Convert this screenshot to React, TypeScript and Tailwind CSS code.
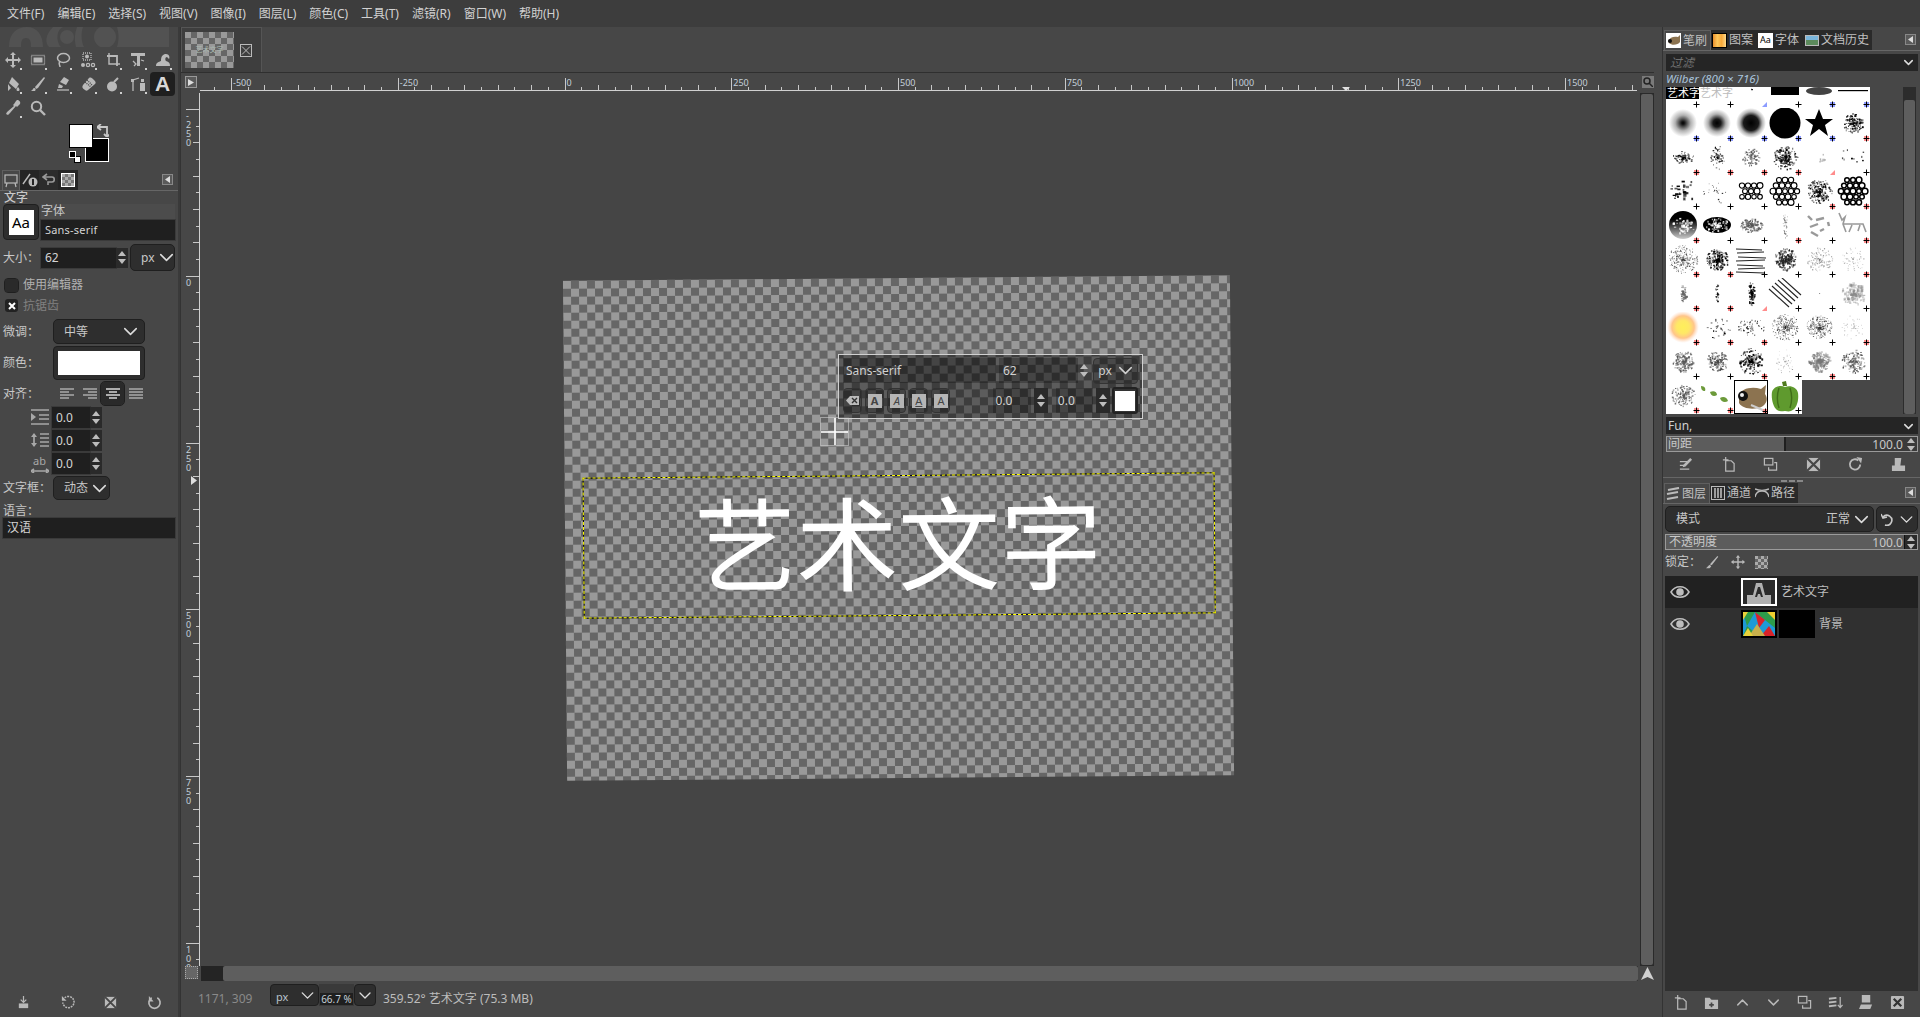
import { ChevronDown, ChevronUp } from "lucide-react";
import type { ReactNode } from "react";

const MENU = ["文件(F)", "编辑(E)", "选择(S)", "视图(V)", "图像(I)", "图层(L)", "颜色(C)", "工具(T)", "滤镜(R)", "窗口(W)", "帮助(H)"];

function Ic({ children, size = 16, className = "text-[#b9b9b9]" }: { children: ReactNode; size?: number; className?: string }) {
  return (
    <svg viewBox="0 0 16 16" width={size} height={size} fill="none" stroke="currentColor" strokeWidth={1.3} className={className}>
      {children}
    </svg>
  );
}

const f = { fill: "currentColor", stroke: "none" };

const TOOLS: ReactNode[] = [
  <><path d="M8 2v12M2 8h12" strokeWidth={2} /><path {...f} d="M8 0l3 3H5zM8 16l3-3H5zM0 8l3-3v6zM16 8l-3-3v6z" /></>,
  <><rect x="1.5" y="3.5" width="13" height="9" strokeDasharray="1 1" /><rect {...f} x="3.5" y="5.5" width="9" height="5" /></>,
  <><ellipse cx="8.5" cy="6" rx="6" ry="4.5" strokeWidth={1.5} /><path d="M5 10c-2 1 0 3 0 5" strokeWidth={1.5} /></>,
  <><rect x="3" y="1" width="8" height="7" strokeDasharray="1 1" /><circle {...f} cx="7" cy="4.5" r="2" /><circle {...f} cx="3" cy="13" r="2" /><circle cx="8" cy="13" r="1.6" /><circle cx="13" cy="13" r="1.6" /></>,
  <><path d="M2 4h10v10" strokeWidth={1.8} /><path d="M4 1v11h11" strokeWidth={1.4} /></>,
  <><path {...f} d="M1 1h14v3H10v10H7V4H1z" /><path d="M3 9l3 3-2 2" /><path d="M11 8l3 1" /></>,
  <><path {...f} d="M1 14c0-4 3-4 5-5 0-5 2-7 5-7s4 3 3 5l-2-2c-2 0-2 3-1 4 3 1 4 2 4 5z" /></>,
  <><path {...f} d="M7 1l7 7-3 5-7-6zM3 8l3 4-3 3z" /><path {...f} d="M13 11c2 2 2 4 0 4s-2-2 0-4z" /></>,
  <><path {...f} d="M14 1l1 1-7 10-2 1-1-2z" /><path {...f} d="M4 12c2 0 2 2 1 3H1c2-1 2-3 3-3z" /></>,
  <><path {...f} d="M9 1l5 3-3 5-6-3z" /><path d="M2 14h12" /><path {...f} d="M4 8l4 2-1 2H3z" /></>,
  <><path {...f} d="M5 14c-3-2-3-3-2-5l6-7c2-1 3 0 5 2s2 3 1 4l-7 6c-1 1-2 1-3 0z" /><path stroke="#474747" strokeDasharray="1 1" d="M5 6l6 5M7 4l5 5" /></>,
  <><circle {...f} cx="7" cy="10.5" r="5" /><path d="M9 6l4-4" strokeWidth={2} /></>,
  <><path d="M3 15V4l6-2" /><rect {...f} x="1" y="3" width="3" height="3" /><rect {...f} x="10" y="7" width="5" height="8" /><rect {...f} x="11" y="3" width="3" height="3" /></>,
  <></>,
  <><path {...f} d="M12 0c2 0 4 2 3 4l-2 2-1 1-1-1-6 7-2 2-2-1 1-2 7-6-1-1 1-1 2-3z" /></>,
  <><circle cx="6.5" cy="6.5" r="4.7" strokeWidth={2} /><path d="M10 10l5 5" strokeWidth={2.4} /></>,
];

function rng(seed: number) {
  let s = seed * 9301 + 49297;
  return () => {
    s = (s * 1664525 + 1013904223) % 4294967296;
    return s / 4294967296;
  };
}

type N = { n: number; rx: number; ry: number; s: number; c?: string; o?: number };

function Noise({ seed, n, rx, ry, s, c = "#000", o = 1 }: N & { seed: number }) {
  const r = rng(seed);
  const dots = [];
  for (let i = 0; i < n; i++) {
    const a = r() * Math.PI * 2;
    const d = Math.pow(r(), 0.9);
    dots.push(
      <rect key={i} x={17 + Math.cos(a) * d * rx} y={15 + Math.sin(a) * d * ry} width={s * (0.5 + r())} height={s * (0.5 + r())} fill={c} opacity={o * (0.4 + r() * 0.6)} />,
    );
  }
  return <>{dots}</>;
}

const nz = (n: number, rx: number, ry: number, s: number, c?: string, o?: number) => ({ t: "n", n, rx, ry, s, c, o });
const soft = (r: number, core: number) => ({ t: "soft", r, core });
const lab = (t: string) => ({ t });

const BRUSHES: any[][] = [
  [lab("text1"), lab("text2"), nz(4, 1, 1, 1), lab("bar"), lab("blur"), lab("line")],
  [soft(14, 0.12), soft(14, 0.28), soft(15, 0.5), lab("circle"), lab("star"), nz(130, 10, 10, 1.4)],
  [nz(80, 11, 6, 1.3), nz(70, 7, 12, 1.2), nz(90, 9, 9, 1.2, "#555"), nz(170, 12, 12, 1.4), nz(6, 9, 9, 2, "#aaa"), nz(10, 13, 13, 1.4)],
  [nz(30, 13, 13, 2.4), nz(22, 14, 13, 1), lab("bub1"), lab("bub2"), nz(230, 13, 12, 1.2), lab("bub3")],
  [lab("moon"), lab("oval"), nz(160, 11, 7, 1.3, "#555"), nz(30, 3, 14, 1, "#666"), lab("rods"), lab("horse")],
  [nz(300, 15, 14, 0.8, "#333"), nz(200, 11, 11, 1.4), lab("lines"), nz(180, 11, 11, 1.5, "#222"), nz(140, 13, 12, 0.9, "#555", 0.7), nz(60, 12, 12, 0.9, "#777", 0.7)],
  [nz(50, 3, 9, 1.4, "#666"), nz(20, 2, 10, 1.4), nz(70, 3, 12, 1.6), lab("diag"), nz(1, 0, 0, 1), nz(140, 12, 11, 2, "#888", 0.6)],
  [lab("sun"), nz(28, 14, 11, 1.3), nz(55, 14, 10, 1.1), nz(280, 14, 13, 0.8, "#222"), nz(240, 13, 12, 0.9, "#333"), nz(45, 12, 12, 0.8, "#999")],
  [nz(170, 11, 11, 1.4, "#555"), nz(150, 11, 10, 1.3, "#444"), nz(160, 12, 13, 1.5), nz(45, 11, 12, 0.8, "#888"), nz(200, 11, 10, 1.7, "#777", 0.8), nz(130, 12, 12, 1.4, "#555")],
  [nz(170, 12, 11, 1.2, "#555"), lab("leaf"), lab("wilber"), lab("pepper")],
];

const MARKS = ["kktkbb", "bbbbbr", "rrrrTk", "kkkkrr", "rkkrkr", "rrkkkr", "rrTkkk", "rrrkkr", "kkrkrk", "rrrk"];

function Brush({ spec, r, c, mark }: { spec: any; r: number; c: number; mark: string }) {
  const id = `b${r}${c}`;
  const seed = r * 7 + c * 13 + 3;
  let body: ReactNode = null;
  switch (spec.t) {
    case "n":
      body = <Noise seed={seed} {...spec} />;
      break;
    case "soft":
      body = (
        <>
          <defs>
            <radialGradient id={id}>
              <stop offset="0" stopColor="#000" />
              <stop offset={spec.core} stopColor="#000" stopOpacity="0.9" />
              <stop offset={(spec.core + 1) / 2} stopColor="#000" stopOpacity="0.3" />
              <stop offset="1" stopColor="#000" stopOpacity="0" />
            </radialGradient>
          </defs>
          <circle cx="17" cy="15" r={spec.r} fill={`url(#${id})`} />
        </>
      );
      break;
    case "circle":
      body = <circle cx="17" cy="15" r="15.5" fill="#000" />;
      break;
    case "star":
      body = <path d="M17 1l4 10h10l-8 6 3 11-9-7-9 7 3-11-8-6h10z" fill="#000" />;
      break;
    case "text1":
      body = (
        <>
          <rect x="0" y="13" width="33" height="12" fill="#000" />
          <text x="1" y="23" fontSize="11" fill="#fff">艺术字</text>
        </>
      );
      break;
    case "text2":
      body = <text x="0" y="23" fontSize="11" fill="#bbb">艺术字</text>;
      break;
    case "bar":
      body = <rect x="3" y="10" width="28" height="11" fill="#000" />;
      break;
    case "blur":
      body = <ellipse cx="17" cy="17" rx="13" ry="4" fill="#222" opacity="0.85" />;
      break;
    case "line":
      body = <rect x="2" y="16" width="30" height="1.2" fill="#000" />;
      break;
    case "sun":
      body = (
        <>
          <defs>
            <radialGradient id={id}>
              <stop offset="0" stopColor="#ffef5a" />
              <stop offset="0.4" stopColor="#ffe866" />
              <stop offset="0.7" stopColor="#ffc58a" />
              <stop offset="1" stopColor="#ffd9c4" stopOpacity="0" />
            </radialGradient>
          </defs>
          <circle cx="17" cy="15" r="16" fill={`url(#${id})`} />
        </>
      );
      break;
    case "lines":
      body = [5, 9, 13, 17, 21, 25, 28].map((y, i) => <path key={y} d={`M${2 + (i % 3)} ${y}l${26 + (i % 4)} ${i % 2 ? -1 : 1}`} stroke="#222" strokeWidth="1" />);
      break;
    case "diag":
      body = [0, 1, 2, 3, 4].map((i) => <path key={`l${i}`} d={`M${1 + i * 3} ${11 - i * 3}L${21 + i * 3} ${29 - i * 3}`} stroke="#222" strokeWidth="1.1" />);
      break;
    case "rods":
      body = [[6, 6, 10, 10], [14, 10, 22, 8], [8, 17, 16, 14], [9, 22, 16, 26], [26, 12, 27, 16], [18, 21, 22, 19]].map((l, i) => <path key={i} d={`M${l[0]} ${l[1]}L${l[2]} ${l[3]}`} stroke="#999" strokeWidth="2.4" />);
      break;
    case "horse":
      body = <path d="M3 3l3 7 3-3-2 7 3 8M7 14h20l3 8M16 15l-3 7M24 15l-2 6" stroke="#999" strokeWidth="1.6" fill="none" />;
      break;
    case "moon":
      body = (
        <>
          <defs>
            <linearGradient id={id} x1="0" y1="0" x2="0" y2="1">
              <stop offset="0.3" stopColor="#000" />
              <stop offset="1" stopColor="#ccc" />
            </linearGradient>
          </defs>
          <circle cx="17" cy="15" r="14" fill={`url(#${id})`} />
          <Noise seed={seed} n={60} rx={11} ry={9} s={1.7} c="#fff" />
        </>
      );
      break;
    case "oval":
      body = (
        <>
          <ellipse cx="17" cy="15" rx="14" ry="8" fill="#000" />
          <Noise seed={seed} n={70} rx={13} ry={7} s={1.6} c="#fff" />
        </>
      );
      break;
    case "bub1":
    case "bub2":
    case "bub3": {
      const rad = spec.t === "bub1" ? 11 : 15;
      const g = rng(seed);
      const items = [];
      for (let y = 0; y < 5; y++) {
        for (let x = 0; x < 5; x++) {
          const cx = 5 + x * 6 + (y % 2) * 3;
          const cy = 4 + y * 5.6;
          if (Math.hypot(cx - 17, cy - 15) < rad) items.push(<circle key={`${x}${y}`} cx={cx} cy={cy} r={2.2 + g() * 0.8} fill="none" stroke="#000" strokeWidth={spec.t === "bub3" ? 1.5 : 1.1} />);
        }
      }
      body = <>{items}</>;
      break;
    }
    case "leaf":
      body = <path d="M1 6c4 0 5 3 4 5-3 0-4-2-4-5zM10 12c4-2 7 0 7 3-3 2-6 1-7-3zM20 18c3-2 7-1 8 3-3 2-7 1-8-3z" fill="#6c9a3a" />;
      break;
    case "wilber":
      body = (
        <>
          <path d="M4 14c2-6 12-9 22-6l5-4-1 9c3 4 2 9-2 12-6 4-20 4-24-3z" fill="#8c7350" />
          <circle cx="8" cy="15" r="5" fill="#111" />
          <circle cx="7" cy="14" r="2" fill="#eee" />
          <path d="M16 24l14 6" stroke="#ccc" strokeWidth="2" />
        </>
      );
      break;
    case "pepper":
      body = (
        <>
          <path d="M14 2l4-1 1 5h-4z" fill="#4f7a1e" />
          <path d="M4 12c2-6 9-7 13-5 5-2 12 0 13 6 1 7-1 16-7 18-3 1-4 0-6 0-3 0-5 1-8-1C5 27 3 18 4 12z" fill="#5f9a2e" />
          <path d="M11 8c-2 6-2 14 0 20M22 8c2 6 2 14 0 20" stroke="#3f6d18" strokeWidth="1.4" fill="none" />
        </>
      );
      break;
  }
  return (
    <div className={`relative h-[34px] w-[34px] overflow-hidden bg-white ${spec.t === "wilber" ? "border border-black" : ""}`}>
      <svg viewBox="0 0 34 34" width="34" height="34" className="block">
        {body}
        {mark === "b" && <rect x="28" y="28" width="5" height="5" fill="#8f9cff" />}
        {mark === "r" && <rect x="28" y="28" width="5" height="5" fill="#ff8f8f" />}
        {mark === "t" && <path d="M33 28v5h-5z" fill="#8c9cff" />}
        {mark === "T" && <path d="M33 28v5h-5z" fill="#ff8c8c" />}
        {mark !== "t" && mark !== "T" && <path d="M30.500 27.500v6M27.500 30.500h6" stroke="#000" strokeWidth="1" />}
      </svg>
    </div>
  );
}

function Entry({ children, className = "" }: { children: ReactNode; className?: string }) {
  return <div className={`flex items-center bg-[#1f1f1f] px-1 text-[#d4d4d4] outline outline-1 outline-[#3a3a3a] ${className}`}>{children}</div>;
}

function Spin({ className = "" }: { className?: string }) {
  return (
    <div className={`flex w-[12px] flex-col items-center justify-center bg-[#2a2a2a] text-[#bdbdbd] ${className}`}>
      <svg width="8" height="5" viewBox="0 0 8 5" className="mb-[3px]"><path d="M4 0l4 5H0z" fill="currentColor" /></svg>
      <svg width="8" height="5" viewBox="0 0 8 5"><path d="M4 5l4-5H0z" fill="currentColor" /></svg>
    </div>
  );
}

function Combo({ label, className = "" }: { label: ReactNode; className?: string }) {
  return (
    <div className={`flex items-center justify-between rounded-[5px] border border-[#1f1f1f] bg-[#2e2e2e] pl-[10px] pr-[2px] text-[#c8c8c8] ${className}`}>
      <span className="whitespace-nowrap">{label}</span>
      <ChevronDown size={23} strokeWidth={1.6} className="shrink-0 text-[#dcdcdc]" />
    </div>
  );
}

function ConfigBtn() {
  return (
    <div className="flex h-[11px] w-[11px] items-center justify-center border border-[#888] bg-[#5a5a5a]">
      <svg width="5" height="7" viewBox="0 0 5 7"><path d="M5 0v7L0 3.5z" fill="#ddd" /></svg>
    </div>
  );
}

function Eye() {
  return (
    <svg width="20" height="14" viewBox="0 0 20 14" fill="none" stroke="#bdbdbd" strokeWidth="1.6">
      <path d="M1 7c4-7 14-7 18 0-4 7-14 7-18 0z" />
      <circle cx="10" cy="7" r="3" fill="#bdbdbd" />
    </svg>
  );
}

function SmallBtn({ children }: { children: ReactNode }) {
  return <div className="flex h-[25px] w-[20px] items-center justify-center rounded-[4px] border border-[#333] bg-black/25">{children}</div>;
}

function LeftDock() {
  return (
    <aside className="flex h-full w-[178px] shrink-0 flex-col text-[12px] text-[#c8c8c8]">
      <div className="h-[21px] pl-[9px]">
        <svg width="160" height="20" viewBox="0 0 160 20" fill="#525252">
          <path d="M0 20C0 6 8 0 18 0s16 8 16 20H22c0-6-1-9-5-9s-5 3-5 9z" />
          <path d="M40 20c-4-4-4-12 4-20h10c-8 4-6 16-2 20z" />
          <circle cx="58" cy="10" r="7" />
          <path d="M68 0h6c-2 6-2 14 1 20h-8c-2-8-1-14 1-20z" />
          <circle cx="96" cy="10" r="11" />
          <path d="M108 0h61l-4 20h-57c2-7 2-13 0-20z" />
        </svg>
      </div>
      <div className="grid grid-cols-[repeat(7,25px)] auto-rows-[24px]">
        {TOOLS.map((t, i) =>
          i === 13 ? (
            <div key={i} className="flex items-center justify-center rounded-[4px] bg-[#1f1f1f] font-['Liberation_Sans',sans-serif] text-[21px] font-bold text-[#d8d8d8]">A</div>
          ) : (
            <div key={i} className="relative flex items-center justify-center">
              <Ic>{t}</Ic>
              {i !== 15 && <span className="absolute bottom-[2px] right-[3px] h-[2px] w-[2px] bg-[#d0d0d0]" />}
            </div>
          ),
        )}
      </div>
      <div className="relative ml-[69px] h-[50px] w-[40px]">
        <div className="absolute left-[16px] top-[18px] h-[24px] w-[24px] border border-white bg-black" />
        <div className="absolute left-0 top-[4px] h-[24px] w-[24px] border border-black bg-white" />
        <div className="absolute left-[5px] top-[36px] h-[7px] w-[7px] border border-black bg-white" />
        <div className="absolute left-0 top-[31px] h-[7px] w-[7px] border border-white bg-black" />
        <svg className="absolute left-[28px] top-[4px]" width="12" height="13" viewBox="0 0 12 13" fill="none" stroke="#c8c8c8" strokeWidth="1.8">
          <path d="M4 0L0 3l4 3M1 3h9v10" />
          <path d="M7 10l3 3 3-3" />
        </svg>
      </div>
      <div className="flex h-[20px] items-end pl-[2px]">
        <div className="flex h-[20px] w-[18px] items-center justify-center border border-b-0 border-[#5f5f5f] bg-[#474747]">
          <svg width="14" height="14" viewBox="0 0 14 14" fill="none" stroke="#bbb" strokeWidth="1.2"><rect x="1" y="1" width="12" height="8" /><path d="M3 9l-1 4M11 9l1 4" /></svg>
        </div>
        <div className="flex h-[20px] w-[19px] items-center justify-center bg-[#252525]">
          <svg width="16" height="14" viewBox="0 0 16 14" fill="#bbb"><path d="M1 11L8 1" stroke="#bbb" strokeWidth="1.4" /><circle cx="11" cy="9" r="4.5" /><rect x="10" y="6" width="2" height="6" fill="#252525" /></svg>
        </div>
        <div className="flex h-[20px] w-[19px] items-center justify-center bg-[#2c2c2c]">
          <svg width="14" height="14" viewBox="0 0 14 14" fill="none" stroke="#999" strokeWidth="1.6"><path d="M5 1L1 4l4 3M1 4h9c3 0 3 5 0 5H6v3" /></svg>
        </div>
        <div className="flex h-[20px] w-[20px] items-center justify-center bg-[#252525]">
          <div className="h-[14px] w-[14px] border border-white bg-[repeating-conic-gradient(#777_0_25%,#aaa_0_50%)] bg-[length:6px_6px]" />
        </div>
        <div className="flex-1" />
        <div className="mb-[5px] mr-[5px]"><ConfigBtn /></div>
      </div>
      <div className="flex flex-1 flex-col border-t border-[#666] pl-[3px] pr-[3px]">
        <div className="h-[13px] pl-[1px] text-[12px] font-medium leading-[13px]">文字</div>
        <div className="flex h-[36px] gap-[2px]">
          <div className="flex h-[36px] w-[36px] items-center justify-center rounded-[4px] border border-[#1f1f1f] bg-[#2e2e2e]">
            <div className="flex h-[25px] w-[25px] items-center justify-center bg-white text-[15px] text-black">Aa</div>
          </div>
          <div className="flex w-[134px] flex-col">
            <div className="h-[16px] bg-[#4c4c4c] text-[12px] leading-[14px]">字体</div>
            <Entry className="h-[20px] text-[11px] tracking-[0.2px]">Sans-serif</Entry>
          </div>
        </div>
        <div className="mt-[4px] flex h-[27px] items-center">
          <span className="w-[38px] text-[12px]">大小：</span>
          <Entry className="h-[20px] w-[75px] text-[12px]">62</Entry>
          <Spin className="h-[20px]" />
          <Combo label="px" className="ml-[2px] h-[27px] w-[45px] pl-[5px] pr-0 text-[12px]" />
        </div>
        <div className="mt-[5px] flex h-[18px] items-center">
          <span className="ml-[2px] h-[13px] w-[13px] rounded-[3px] bg-[#2a2a2a] outline outline-1 outline-[#1f1f1f]" />
          <span className="ml-[5px] text-[12px] text-[#b0b0b0]">使用编辑器</span>
        </div>
        <div className="mt-[3px] flex h-[17px] items-center">
          <span className="ml-[2px] flex h-[13px] w-[13px] items-center justify-center rounded-[3px] bg-[#222]">
            <svg width="8" height="8" viewBox="0 0 8 8" stroke="#fff" strokeWidth="2"><path d="M1 1l6 6M7 1L1 7" /></svg>
          </span>
          <span className="ml-[5px] text-[12px] text-[#808080]">抗锯齿</span>
        </div>
        <div className="mt-[5px] flex h-[25px] items-center">
          <span className="w-[50px]">微调：</span>
          <Combo label="中等" className="h-[25px] w-[92px] text-[12px]" />
        </div>
        <div className="mt-[2px] flex h-[34px] items-center">
          <span className="w-[50px]">颜色：</span>
          <div className="flex h-[34px] w-[92px] items-center justify-center rounded-[4px] border border-[#1f1f1f] bg-[#2e2e2e]">
            <div className="h-[24px] w-[82px] bg-white" />
          </div>
        </div>
        <div className="mt-[2px] flex h-[23px] items-center">
          <span className="w-[52px]">对齐：</span>
          {[0, 1, 2, 3].map((a) => (
            <div key={a} className={`flex h-[23px] w-[23px] items-center justify-center rounded-[4px] ${a === 2 ? "bg-[#2a2a2a] outline outline-1 outline-[#1f1f1f]" : ""}`}>
              <svg width="14" height="12" viewBox="0 0 14 12" stroke={a === 2 ? "#d8d8d8" : "#aaa"} strokeWidth="1.4">
                <path d={["M0 1h14M0 4h9M0 7h14M0 10h9", "M0 1h14M5 4h9M0 7h14M5 10h9", "M0 1h14M3 4h8M0 7h14M3 10h8", "M0 1h14M0 4h14M0 7h14M0 10h14"][a]} />
              </svg>
            </div>
          ))}
        </div>
        {[
          <path key="a" d="M0 1h18M8 6h10M8 10h10M0 15h18" />,
          <path key="b" d="M3 2v12M9 2h9M9 6h9M9 10h9M9 14h9" />,
          <path key="c" d="M2 16h14M0 16l3-2M0 16l3 2M18 16l-3-2M18 16l-3 2" />,
        ].map((d, i) => (
          <div key={i} className="mt-[2px] flex h-[21px] items-center">
            <svg className="ml-[28px] mr-[3px]" width="18" height="18" viewBox="0 0 18 18" fill="none" stroke="#a8a8a8" strokeWidth="1.7">
              {d}
              {i === 0 && <path d="M0 4l5 4-5 4z" fill="#a8a8a8" stroke="none" />}
              {i === 1 && <path d="M0 5l3-4 3 4zM0 11l3 4 3-4z" fill="#a8a8a8" stroke="none" />}
              {i === 2 && <text x="2" y="10" fontSize="11" fill="#a8a8a8" stroke="none">ab</text>}
            </svg>
            <Entry className="h-[21px] w-[38px] text-[12px]">0.0</Entry>
            <Spin className="h-[21px]" />
          </div>
        ))}
        <div className="mt-[2px] flex h-[24px] items-center">
          <span className="w-[50px] whitespace-nowrap">文字框：</span>
          <Combo label="动态" className="h-[24px] w-[57px] pl-[9px] pr-0 text-[12px]" />
        </div>
        <div className="mt-[3px] h-[15px] text-[12px] leading-[15px]">语言：</div>
        <Entry className="h-[20px] text-[12px]">汉语</Entry>
        <div className="flex-1" />
      </div>
      <div className="flex h-[25px] items-center justify-between px-[16px] pb-[4px] text-[#b9b9b9]">
        <Ic size={15}><path d="M8 1v7M5 5l3 3 3-3" /><path {...f} d="M3 9h10v5H3z" /></Ic>
        <Ic size={15}><path d="M5 3a6 6 0 1 1-2 5" strokeDasharray="2 1" strokeWidth={1.6} /><path {...f} d="M2 1v5h5z" /></Ic>
        <Ic size={15}><rect {...f} x="2" y="2" width="12" height="12" /><path d="M2 2l12 12M14 2L2 14" stroke="#474747" strokeWidth={2} /></Ic>
        <Ic size={15}><path d="M11 3a6 6 0 1 1-6 0" strokeWidth={1.8} /><path {...f} d="M2 1v6h5z" /></Ic>
      </div>
    </aside>
  );
}

function HRuler() {
  const ticks = [];
  for (let k = -1; k < 85; k++) {
    const x = 31 + k * 16.675;
    const h = k % 10 === 0 ? 12 : k % 2 === 0 ? 5 : 3;
    ticks.push(<path key={k} d={`M${Math.round(x) + 0.5} 17v-${h}`} stroke="#c8c8c8" />);
  }
  const labels = ["-500", "-250", "0", "250", "500", "750", "1000", "1250", "1500"];
  return (
    <svg width="1441" height="18" className="block">
      <path d="M0 17.5H1437" stroke="#d0d0d0" />
      {ticks}
      {labels.map((l, i) => (
        <text key={l} x={33 + i * 166.75} y="13" fontSize="9" fill="#c4cfd8">{l}</text>
      ))}
      <path d="M1142 14h8l-4 4z" fill="#e0e0e0" />
    </svg>
  );
}

function VRuler() {
  const ticks = [];
  for (let k = -1; k < 53; k++) {
    const y = 16 + k * 16.675;
    const w = k % 10 === 0 ? 13 : k % 2 === 0 ? 6 : 3;
    ticks.push(<path key={k} d={`M18 ${Math.round(y) + 0.5}h-${w}`} stroke="#c8c8c8" />);
  }
  const labels = ["-250", "0", "250", "500", "750", "1000"];
  return (
    <svg width="19" height="873" className="block">
      <path d="M18.5 0V873" stroke="#d0d0d0" />
      {ticks}
      {labels.map((l, i) =>
        l.split("").map((ch, j) => (
          <text key={`${l}${j}`} x="5" y={16 + i * 166.75 + 10 + j * 9} fontSize="9" fill="#c4cfd8">{ch}</text>
        )),
      )}
      <path d="M10 383l6 4.500-6 4.500z" fill="#ddd" />
    </svg>
  );
}

function Canvas() {
  return (
    <div className="relative flex-1 overflow-hidden bg-[#454545]">
      <div className="absolute left-[365px] top-[185px] h-[500px] w-[667px] rotate-[-0.48deg] bg-[repeating-conic-gradient(#666_0_25%,#999_0_50%)] bg-[length:16px_16px]">
        <div className="absolute left-[18px] top-[197px] flex h-[141px] w-[632px] items-center justify-center border border-black pb-[4px] pr-[2px]">
          <div className="absolute -inset-px border border-dashed border-[#ffff00]" />
          <span className="text-[102px] leading-none text-white">艺术文字</span>
        </div>
      </div>
      <div className="absolute left-[620px] top-[324px] h-[29px] w-[29px] border border-[#ccc]/60">
        <div className="absolute left-[13px] top-0 h-full w-[2px] bg-white/80" />
        <div className="absolute left-0 top-[13px] h-[2px] w-full bg-white/80" />
      </div>
      <div className="absolute left-[638px] top-[261px] flex h-[65px] w-[305px] flex-col gap-[4px] border border-[#d0d0d0] bg-black/40 px-[4px] pt-[3px] text-[12px] text-[#d0d0d0]">
        <div className="flex h-[25px] items-center">
          <div className="flex h-[25px] w-[154px] items-center bg-black/25 pl-[3px]">Sans-serif</div>
          <div className="ml-[3px] flex h-[25px] w-[80px] items-center bg-black/25 pl-[4px]">62</div>
          <Spin className="h-[25px] !bg-transparent" />
          <div className="ml-[3px] flex h-[26px] w-[45px] items-center justify-between rounded-[4px] border border-[#333] bg-black/20 pl-[4px]">
            px <ChevronDown size={23} strokeWidth={1.6} />
          </div>
        </div>
        <div className="flex h-[27px] items-center gap-[3px]">
          <SmallBtn>
            <svg width="13" height="9" viewBox="0 0 13 9"><path d="M4 0h9v9H4L0 4.500z" fill="#bbb" /><path d="M6 2l5 5M11 2L6 7" stroke="#333" strokeWidth="1.400" /></svg>
          </SmallBtn>
          {["font-bold", "italic", "underline", ""].map((s, i) => (
            <SmallBtn key={i}>
              <span className={`flex h-[14px] w-[14px] items-center justify-center bg-[#b5b5b5] text-[11px] leading-none text-[#444] ${s}`}>A</span>
            </SmallBtn>
          ))}
          <div className="ml-[40px] flex h-[25px] w-[39px] items-center bg-black/25 pl-[2px]">0.0</div>
          <Spin className="h-[25px] w-[15px]" />
          <div className="ml-[5px] flex h-[25px] w-[39px] items-center bg-black/25 pl-[2px]">0.0</div>
          <Spin className="h-[25px] w-[15px]" />
          <div className="ml-[-1px] flex h-[27px] w-[27px] items-center justify-center rounded-[3px] border-2 border-[#222] bg-[#333]">
            <div className="h-[20px] w-[20px] bg-white" />
          </div>
        </div>
      </div>
    </div>
  );
}

function Center() {
  return (
    <main className="flex h-full w-[1474px] shrink-0 flex-col border-l border-[#333]">
      <div className="flex h-[46px] items-end border-b border-[#2f2f2f] pt-[1px]">
        <div className="flex h-[45px] w-[81px] items-center border border-b-0 border-[#555] bg-[#3e3e3e] pl-[3px]">
          <div className="flex h-[36px] w-[49px] items-center justify-center bg-[repeating-conic-gradient(#666_0_25%,#999_0_50%)] bg-[length:12px_12px] text-[7px] text-[#a9b7b0]">
            <span className="whitespace-nowrap">艺术文字</span>
          </div>
          <svg className="ml-[6px]" width="12" height="13" viewBox="0 0 12 13" fill="none" stroke="#bbb"><rect x="0.5" y="0.5" width="11" height="12" /><path d="M2 2.500l8 8M10 2.500l-8 8" /></svg>
        </div>
      </div>
      <div className="flex h-[20px]">
        <div className="flex w-[19px] shrink-0 items-center justify-center pb-[2px]">
          <div className="flex h-[12px] w-[12px] items-center justify-center border border-[#999] bg-[#5a5a5a]">
            <svg width="6" height="7" viewBox="0 0 6 7"><path d="M0 0v7l6-3.500z" fill="#ddd" /></svg>
          </div>
        </div>
        <HRuler />
        <div className="flex flex-1 items-center justify-center pb-[2px]">
          <div className="flex h-[12px] w-[12px] items-center justify-center bg-[#7a7a7a]">
            <svg width="10" height="10" viewBox="0 0 10 10" fill="none" stroke="#222" strokeWidth="1.500"><circle cx="4" cy="4" r="3" /><path d="M6 6l4 4" /></svg>
          </div>
        </div>
      </div>
      <div className="flex h-[873px]">
        <div className="w-[19px] shrink-0"><VRuler /></div>
        <Canvas />
        <div className="flex w-[14px] shrink-0 flex-col bg-[#2a2a2a] p-px">
          <div className="flex-1 rounded-[2px] bg-[#5e5e5e]" />
        </div>
      </div>
      <div className="flex h-[15px] items-stretch">
        <div className="ml-[4px] h-[13px] w-[13px] border border-dotted border-[#aaa] bg-[#666]" />
        <div className="ml-[3px] flex w-[1440px] bg-[#242424]">
          <div className="ml-[22px] flex-1 rounded-[2px] bg-[#5e5e5e]" />
        </div>
        <svg className="ml-[3px] mt-[1px]" width="13" height="13" viewBox="0 0 13 13"><path d="M6.500 0L13 13l-6.500-3L0 13z" fill="#d0d0d0" /></svg>
      </div>
      <div className="flex h-[36px] items-start pt-[3px] text-[12px]">
        <span className="ml-[17px] mt-[6px] w-[72px] text-[#8a8a8a]">1171, 309</span>
        <div className="flex h-[22px] w-[49px] items-center justify-between rounded-[4px] border border-[#1f1f1f] bg-[#2e2e2e] pl-[5px] text-[11px] text-[#b8c4cc]">
          <span className="mt-[4px]">px</span> <ChevronDown size={21} strokeWidth={1.6} className="text-[#ddd]" />
        </div>
        <div className="flex h-[22px] w-[35px] items-end justify-center bg-[#3a3a3a]">
          <span className="mb-[1px] bg-[#1f1f1f] px-px text-[10px] leading-[12px] text-[#c5d0d8]">66.7 %</span>
        </div>
        <div className="flex h-[22px] w-[22px] items-center justify-center rounded-[4px] border border-[#1f1f1f] bg-[#2e2e2e]">
          <ChevronDown size={21} strokeWidth={1.6} className="text-[#ddd]" />
        </div>
        <span className="ml-[7px] mt-[6px] text-[#bcbcbc]">359.52° 艺术文字 (75.3 MB)</span>
      </div>
    </main>
  );
}

function DockTab({ icon, label, width, active }: { icon: ReactNode; label: string; width: number; active?: boolean }) {
  return (
    <div style={{ width }} className={`flex h-[20px] items-center gap-[2px] pl-[1px] text-[12px] text-[#c0c0c0] ${active ? "border border-b-0 border-[#5f5f5f] bg-[#474747]" : "bg-[#2a2a2a]"}`}>
      {icon}
      <span className="whitespace-nowrap">{label}</span>
    </div>
  );
}

function RightDock() {
  return (
    <aside className="ml-[8px] flex h-full w-[258px] shrink-0 flex-col border-l border-[#333] text-[12px] text-[#c8c8c8]">
      <div className="mt-[1px] flex h-[22px] items-end pl-[1px]">
        <DockTab
          width={47}
          active
          label="笔刷"
          icon={
            <svg width="15" height="15" viewBox="0 0 15 15"><rect width="15" height="15" fill="#fff" /><path d="M2 8c2-4 6-5 10-4l2-2v7c-2 3-8 4-11 1z" fill="#8c7350" /><circle cx="4" cy="8" r="2" fill="#111" /></svg>
          }
        />
        <DockTab
          width={46}
          label="图案"
          icon={<div className="h-[15px] w-[15px] border border-black bg-[linear-gradient(90deg,#e88e2c,#ffc85a,#f6a83a,#ffd98a)]" />}
        />
        <DockTab
          width={47}
          label="字体"
          icon={<div className="flex h-[15px] w-[15px] items-center justify-center bg-white text-[9px] text-black">Aa</div>}
        />
        <DockTab
          width={68}
          label="文档历史"
          icon={<div className="h-[11px] w-[14px] border border-[#bbb] bg-[linear-gradient(#7ab6dc_50%,#5c8a5c_50%)]" />}
        />
        <div className="flex-1" />
        <div className="mb-[5px] mr-[4px]"><ConfigBtn /></div>
      </div>
      <div className="flex h-[428px] flex-col border-b border-t border-[#666] pl-[3px] pr-[2px]">
        <div className="mt-[3px] flex h-[17px] items-center justify-between bg-[#252525] pl-[4px] pr-[2px] italic text-[#707070]">
          过滤
          <ChevronDown size={15} strokeWidth={2.4} className="not-italic text-[#ddd]" />
        </div>
        <div className="h-[16px] text-[11.500px] italic leading-[16px] text-[#a9c4dc]">Wilber (800 × 716)</div>
        <div className="flex h-[327px]">
          <div className="w-[204px] overflow-hidden">
            <div className="-mt-[13px] grid grid-cols-[repeat(6,34px)] auto-rows-[34px]">
              {BRUSHES.map((row, r) =>
                row.map((spec, c) => <Brush key={`${r}-${c}`} spec={spec} r={r} c={c} mark={MARKS[r][c]} />),
              )}
            </div>
          </div>
          <div className="ml-[33px] flex w-[13px] flex-col bg-[#2c2c2c] px-px">
            <div className="mt-[13px] flex-1 rounded-[2px] bg-[#5e5e5e]" />
          </div>
        </div>
        <div className="mt-[3px] flex h-[17px] items-center justify-between bg-[#252525] pl-[2px] pr-[2px] pt-[1px] text-[#d0d0d0]">
          Fun,
          <ChevronDown size={15} strokeWidth={2.4} className="text-[#ddd]" />
        </div>
        <div className="relative mt-[2px] flex h-[16px] items-center justify-between border border-[#9a9a9a] bg-[#3a3a3a]">
          <div className="absolute left-0 top-0 h-full w-[119px] border-r-2 border-[#1f1f1f] bg-[#5c5c5c]" />
          <span className="relative pl-[1px]">间距</span>
          <div className="relative flex items-center">
            <span className="mt-[1px]">100.0</span>
            <Spin className="ml-[2px] h-[14px] w-[10px] !bg-transparent" />
          </div>
        </div>
        <div className="flex h-[25px] items-center justify-between px-[12px]">
          <Ic size={15}><path d="M2 13h10M2 9h5M2 5h8" /><path {...f} d="M13 1l2 2-7 7-3 1 1-3z" /></Ic>
          <Ic size={15}><path d="M5 4h6l3 3v8H5zM5 0v6M2 3h6" /></Ic>
          <Ic size={15}><rect x="1.500" y="1.500" width="9" height="7" /><path d="M12 6h2.500v8H6v-3" /></Ic>
          <Ic size={15}><rect {...f} x="1" y="1" width="14" height="14" /><path d="M1 1l14 14M15 1L1 15" stroke="#474747" strokeWidth={2.400} /></Ic>
          <Ic size={15}><path d="M13 8a5.500 5.500 0 1 1-2-4.300" strokeWidth={2} /><path {...f} d="M9 0l6 1-1 6z" /></Ic>
          <Ic size={15}><path {...f} d="M4 1h7l-1 8H4zM1 9h14v6H1z" /></Ic>
        </div>
      </div>
      <div className="flex h-[5px] items-center justify-center gap-[2px]">
        <span className="h-[2px] w-[6px] bg-[#888]" />
        <span className="h-[2px] w-[6px] bg-[#888]" />
        <span className="h-[2px] w-[6px] bg-[#888]" />
      </div>
      <div className="flex h-[20px] items-end pl-[1px]">
        <DockTab
          width={46}
          active
          label="图层"
          icon={<svg width="14" height="14" viewBox="0 0 14 14" stroke="#bbb" strokeWidth="2.200"><path d="M2 3l11-2M1 7l11-2M1 12l11-2" /></svg>}
        />
        <DockTab
          width={44}
          label="通道"
          icon={<svg width="14" height="14" viewBox="0 0 14 14" fill="none" stroke="#bbb"><rect x="0.500" y="0.500" width="13" height="13" /><path d="M4 2v10M7 2v10M10 2v10" strokeWidth="1.600" /></svg>}
        />
        <DockTab
          width={44}
          label="路径"
          icon={<svg width="14" height="14" viewBox="0 0 14 14" fill="none" stroke="#bbb" strokeWidth="1.400"><path d="M0 3c5 2 9 2 14 0M0 11c1-5 4-6 7-6s6 1 7 6" /></svg>}
        />
        <div className="flex-1" />
        <div className="mb-[5px] mr-[4px]"><ConfigBtn /></div>
      </div>
      <div className="flex flex-1 flex-col border-t border-[#666] pl-[2px] pr-[2px]">
        <div className="mt-[2px] flex h-[26px] gap-[2px]">
          <Combo label={<span className="flex w-[174px] justify-between"><span>模式</span><span>正常</span></span>} className="h-[26px] w-[209px] pl-[7px] pr-[2px]" />
          <div className="flex h-[26px] w-[42px] items-center justify-between rounded-[5px] border border-[#1f1f1f] bg-[#2e2e2e] pl-[4px]">
            <svg width="12" height="13" viewBox="0 0 12 13" fill="none" stroke="#c8c8c8" strokeWidth="1.600"><path d="M2 4a5 5 0 1 1 2 8" /><path d="M0 1l2 4 4-1" /></svg>
            <ChevronDown size={21} strokeWidth={1.6} className="text-[#ddd]" />
          </div>
        </div>
        <div className="relative mt-[2px] flex h-[16px] items-center justify-between border border-[#9a9a9a] bg-[#5c5c5c]">
          <span className="pl-[3px]">不透明度</span>
          <div className="flex items-center">
            <span className="mt-[1px]">100.0</span>
            <div className="ml-px h-[14px] w-px bg-[#111]" />
            <Spin className="ml-0 h-[14px] w-[11px]" />
          </div>
        </div>
        <div className="flex h-[24px] items-center">
          <span className="w-[40px]">锁定：</span>
          <div className="ml-[1px] flex w-[62px] items-center justify-between">
            <Ic size={14}><path {...f} d="M13 1l1 1-7 9-2 1 0-2zM4 11l2 2-2 2H0z" /></Ic>
            <Ic size={14}><path d="M8 1v14M1 8h14" strokeWidth={1.600} /><path {...f} d="M8 0l2.500 3h-5zM8 16l2.500-3h-5zM0 8l3-2.500v5zM16 8l-3-2.500v5z" /></Ic>
            <div className="h-[13px] w-[13px] bg-[repeating-conic-gradient(#666_0_25%,#aaa_0_50%)] bg-[length:6px_6px]" />
          </div>
        </div>
        <div className="mt-[2px] flex h-[415px] flex-col bg-[#303030]">
          <div className="flex h-[32px] items-center bg-[#212121]">
            <div className="flex w-[76px] justify-start pl-[5px]"><Eye /></div>
            <div className="flex h-[28px] w-[36px] items-end justify-center border-2 border-white bg-[#2a2a2a]">
              <svg width="28" height="22" viewBox="0 0 28 22"><path d="M2 22v-9h6l3-12h6l3 12h6v9z" fill="#b0b0b0" /><path d="M10 15l3-10h2l3 10h-2l-1-3h-2l-1 3z" fill="#2a2a2a" /></svg>
            </div>
            <span className="ml-[4px] text-[#bcbcbc]">艺术文字</span>
          </div>
          <div className="flex h-[32px] items-center">
            <div className="flex w-[76px] justify-start pl-[5px]"><Eye /></div>
            <div className="h-[28px] w-[36px] border-2 border-black">
              <svg width="32" height="24" viewBox="0 0 32 24" className="block">
                <rect width="32" height="24" fill="#1e9ad6" />
                <path d="M0 0h12L4 14zM12 0l10 8 10-8zM4 14l12 10H0zM22 8l10 8V0z" fill="#2d9c4a" />
                <path d="M12 0l10 8-6 8zM26 14l6 10H18z" fill="#d8232a" />
                <path d="M14 12l8 12H6z" fill="#c8b04c" />
                <path d="M24 0h8v8z" fill="#f0d030" />
                <path d="M0 0h5L0 8zM0 24l5-8 5 8z" fill="#e8d13a" />
              </svg>
            </div>
            <div className="ml-[2px] h-[28px] w-[36px] bg-black" />
            <span className="ml-[4px] text-[#bcbcbc]">背景</span>
          </div>
        </div>
        <div className="flex flex-1 items-center pb-[4px] text-[#b9b9b9] [&>div]:flex [&>div]:w-[31px] [&>div]:justify-center">
          <div><Ic size={15}><path d="M5 4h6l3 3v8H5zM5 0v6M2 3h6" /></Ic></div>
          <div><Ic size={15}><path {...f} d="M1 3h5l2 2h7v10H1z" /><path d="M8 8v5M5.500 10.500h5" stroke="#474747" strokeWidth={1.800} /></Ic></div>
          <div><ChevronUp size={19} strokeWidth={1.800} /></div>
          <div><ChevronDown size={19} strokeWidth={1.800} /></div>
          <div><Ic size={15}><rect x="1.500" y="1.500" width="9" height="7" /><path d="M12 6h2.500v8H6v-3" /></Ic></div>
          <div><Ic size={15}><path d="M1 4l8-1M1 8l8-1M1 12l8-1" strokeWidth={2} /><path d="M13 2v11M10.500 10.500l2.500 3 2.500-3" /></Ic></div>
          <div><Ic size={15}><path {...f} d="M3 0h9v8H3zM2 10h12l-2 5H0z" /></Ic></div>
          <div><Ic size={15}><rect {...f} x="1" y="1" width="14" height="14" rx="1" /><path d="M4 4l8 8M12 4l-8 8" stroke="#333" strokeWidth={2.400} /></Ic></div>
        </div>
      </div>
    </aside>
  );
}

export default function App() {
  return (
    <div className="flex h-[1017px] w-[1920px] flex-col overflow-hidden bg-[#474747] font-['Noto_Sans','Noto_Sans_CJK_SC',sans-serif]">
      <nav className="flex h-[27px] shrink-0 items-center gap-[13px] bg-[#3d3d3d] pl-[7px] text-[12px] text-[#d2d2d2]">
        {MENU.map((m) => (
          <span key={m}>{m}</span>
        ))}
      </nav>
      <div className="flex flex-1 overflow-hidden">
        <LeftDock />
        <div className="w-[2px] shrink-0 bg-[#3a3a3a]" />
        <Center />
        <RightDock />
      </div>
    </div>
  );
}
